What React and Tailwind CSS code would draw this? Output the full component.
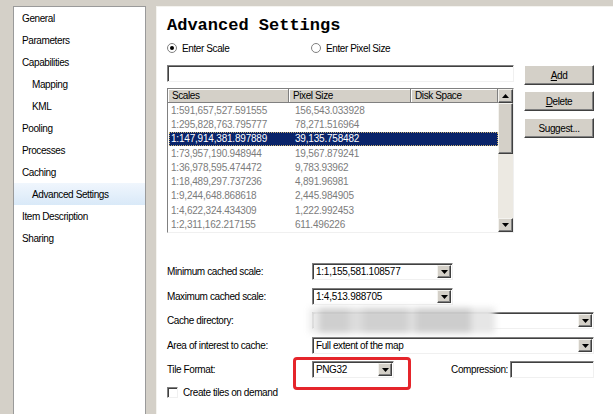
import React from "react";

const navItems = [
  ["General", 0],
  ["Parameters", 0],
  ["Capabilities", 0],
  ["Mapping", 1],
  ["KML", 1],
  ["Pooling", 0],
  ["Processes", 0],
  ["Caching", 0],
  ["Advanced Settings", 1, true],
  ["Item Description", 0],
  ["Sharing", 0],
];

const rows = [
  ["1:591,657,527.591555", "156,543.033928"],
  ["1:295,828,763.795777", "78,271.516964"],
  ["1:147,914,381.897889", "39,135.758482"],
  ["1:73,957,190.948944", "19,567.879241"],
  ["1:36,978,595.474472", "9,783.93962"],
  ["1:18,489,297.737236", "4,891.96981"],
  ["1:9,244,648.868618", "2,445.984905"],
  ["1:4,622,324.434309", "1,222.992453"],
  ["1:2,311,162.217155", "611.496226"],
];

function DownArrow() {
  return (
    <svg width="7" height="4" viewBox="0 0 7 4">
      <path d="M0 0h7L3.5 4z" fill="#000" />
    </svg>
  );
}

function UpArrow() {
  return (
    <svg width="7" height="4" viewBox="0 0 7 4">
      <path d="M0 4h7L3.5 0z" fill="#000" />
    </svg>
  );
}

function DropButton() {
  return (
    <div className="w-[14px] h-full bg-[#d4d0c8] border border-t-[#f4f3ef] border-l-[#f4f3ef] border-b-[#404040] border-r-[#404040] shadow-[inset_-1px_-1px_0_#808080] flex items-center justify-center shrink-0">
      <DownArrow />
    </div>
  );
}

function Combo({ className, mono, children }) {
  return (
    <div
      className={`${className} h-[17px] bg-white border border-t-[#808080] border-l-[#808080] border-b-[#f0f0f0] border-r-[#f0f0f0] shadow-[inset_1px_1px_0_#404040] p-[1px] flex items-stretch`}
    >
      <div
        className={
          mono
            ? "flex-1 flex items-center pl-[2px] tabular-nums tracking-[-0.25px] whitespace-nowrap overflow-hidden"
            : "flex-1 flex items-center pl-[2px] whitespace-nowrap overflow-hidden"
        }
      >
        {children}
      </div>
      <DropButton />
    </div>
  );
}

function Button({ children }) {
  return (
    <div className="h-[20px] w-[70px] bg-[#d4d0c8] border border-t-[#ffffff] border-l-[#ffffff] border-b-[#404040] border-r-[#404040] shadow-[inset_-1px_-1px_0_#808080] flex items-center justify-center">
      {children}
    </div>
  );
}

export default function App() {
  return (
    <div className="w-[613px] h-[414px] overflow-hidden bg-[#d4d0c8] flex pt-[6px] pl-[13px] gap-[10px] font-['Liberation_Sans',Arial,sans-serif] text-[10px] tracking-[-0.4px] text-black">
      {/* Left navigation */}
      <div className="w-[133px] shrink-0 bg-white border border-[#9a9a9a] border-b-0">
        {navItems.map(([label, level, active]) => (
          <div
            key={label}
            className={
              (active
                ? "bg-linear-to-b from-[#f0f6fd] to-[#d9e9f8] "
                : "") +
              (level ? "pl-[18px] " : "pl-[8px] ") +
              "h-[22px] flex items-center whitespace-nowrap"
            }
          >
            {label}
          </div>
        ))}
      </div>

      {/* Right panel */}
      <div className="flex-1 bg-white border-l border-t border-[#f4f3ef] pl-[10px] pr-[20px] flex flex-col">
        <div className="mt-[9px] h-[20px] leading-[20px] font-['Liberation_Mono',monospace] font-bold text-[17px] tracking-[0px]">
          Advanced Settings
        </div>

        <div className="mt-[4px] h-[16px] flex items-center">
          <div className="w-[144px] flex items-center">
            <div className="w-[10px] h-[10px] rounded-full border border-[#808080] bg-white flex items-center justify-center">
              <div className="w-[4px] h-[4px] rounded-full bg-black" />
            </div>
            <span className="ml-[5px]">Enter Scale</span>
          </div>
          <div className="flex items-center">
            <div className="w-[10px] h-[10px] rounded-full border border-[#808080] bg-white" />
            <span className="ml-[5px]">Enter Pixel Size</span>
          </div>
        </div>

        <div className="mt-[9px] flex gap-[10px]">
          <div className="w-[347px] flex flex-col">
            <div className="h-[17px] bg-white border border-t-[#808080] border-l-[#808080] border-b-[#f0f0f0] border-r-[#f0f0f0] shadow-[inset_1px_1px_0_#404040]" />
            <div className="mt-[6px] h-[145px] border border-t-[#808080] border-l-[#808080] border-b-[#f0f0f0] border-r-[#f0f0f0] flex">
              <div className="flex-1 flex flex-col overflow-hidden">
                <div className="h-[14px] flex shrink-0">
                  <div className="w-[121px] bg-[#d4d0c8] border-r border-b border-[#808080] shadow-[inset_1px_1px_0_#ffffff] pl-[4px] flex items-center">
                    Scales
                  </div>
                  <div className="w-[122px] bg-[#d4d0c8] border-r border-b border-[#808080] shadow-[inset_1px_1px_0_#ffffff] pl-[4px] flex items-center">
                    Pixel Size
                  </div>
                  <div className="flex-1 bg-[#d4d0c8] border-r border-b border-[#808080] shadow-[inset_1px_1px_0_#ffffff] pl-[4px] flex items-center">
                    Disk Space
                  </div>
                </div>
                {rows.map(([s, p], i) => (
                  <div
                    key={s}
                    className={
                      (i === 2
                        ? "bg-[#0a246a] text-white outline-1 outline-dotted outline-[#c8b070] -outline-offset-1 ml-[1px] "
                        : "text-[#7c7c7c] ml-[1px] ") +
                      "h-[14.3px] shrink-0 flex items-center tabular-nums tracking-[-0.2px] whitespace-nowrap"
                    }
                  >
                    <div className="w-[120px] pl-[2px]">{s}</div>
                    <div className="w-[122px] pl-[6px]">{p}</div>
                  </div>
                ))}
              </div>
              <div className="w-[15px] flex flex-col bg-[#ece9e2]">
                <div className="h-[14px] bg-[#d4d0c8] border border-t-[#f4f3ef] border-l-[#f4f3ef] border-b-[#404040] border-r-[#404040] shadow-[inset_-1px_-1px_0_#808080] flex items-center justify-center">
                  <UpArrow />
                </div>
                <div className="h-[51px] bg-[#d4d0c8] border border-t-[#f4f3ef] border-l-[#f4f3ef] border-b-[#404040] border-r-[#404040] shadow-[inset_-1px_-1px_0_#808080]" />
                <div className="flex-1" />
                <div className="h-[14px] bg-[#d4d0c8] border border-t-[#f4f3ef] border-l-[#f4f3ef] border-b-[#404040] border-r-[#404040] shadow-[inset_-1px_-1px_0_#808080] flex items-center justify-center">
                  <DownArrow />
                </div>
              </div>
            </div>
          </div>

          <div className="w-[70px] flex flex-col">
            <Button>
              <span className="underline">A</span>dd
            </Button>
            <div className="mt-[6px]">
              <Button>
                <span className="underline">D</span>elete
              </Button>
            </div>
            <div className="mt-[7px]">
              <Button>
                Su<span className="underline">g</span>gest...
              </Button>
            </div>
          </div>
        </div>

        {/* Form */}
        <div className="mt-[30px] flex flex-col">
          <div className="h-[17px] flex items-center">
            <div className="w-[145px] shrink-0">Minimum cached scale:</div>
            <Combo className="w-[141px]" mono>
              1:1,155,581.108577
            </Combo>
          </div>
          <div className="mt-[8px] h-[17px] flex items-center">
            <div className="w-[145px] shrink-0">Maximum cached scale:</div>
            <Combo className="w-[141px]" mono>
              1:4,513.988705
            </Combo>
          </div>
          <div className="mt-[7px] h-[17px] flex items-center relative">
            <div className="w-[145px] shrink-0">Cache directory:</div>
            <Combo className="flex-1" />
            <div className="absolute left-[142px] top-[-4px] w-[186px] h-[25px] flex blur-[3px]">
              <div className="w-[10px] bg-[#ececec]" />
              <div className="w-[30px] bg-[#cfcfcf]" />
              <div className="w-[14px] bg-[#dcdcdc]" />
              <div className="w-[45px] bg-[#d0d0d0]" />
              <div className="w-[8px] bg-[#dedede]" />
              <div className="w-[55px] bg-[#cdcdcd]" />
              <div className="w-[24px] bg-[#e6e6e6]" />
            </div>
          </div>
          <div className="mt-[8px] h-[17px] flex items-center">
            <div className="w-[145px] shrink-0">Area of interest to cache:</div>
            <Combo className="flex-1">Full extent of the map</Combo>
          </div>
          <div className="mt-[7px] h-[17px] flex items-center relative">
            <div className="w-[145px] shrink-0">Tile Format:</div>
            <Combo className="w-[82px]">PNG32</Combo>
            <div className="flex-1" />
            <div className="mr-[2px]">Compression:</div>
            <div className="w-[84px] h-[17px] bg-white border border-t-[#808080] border-l-[#808080] border-b-[#f0f0f0] border-r-[#f0f0f0] shadow-[inset_1px_1px_0_#404040]" />
            <div className="absolute left-[126px] top-[-4px] w-[118px] h-[33px] border-[3px] border-[#e5252b] rounded-[4px]" />
          </div>
          <div className="mt-[9px] h-[11px] flex items-center">
            <div className="w-[11px] h-[11px] bg-white border border-t-[#808080] border-l-[#808080] border-b-[#f0f0f0] border-r-[#f0f0f0] shadow-[inset_1px_1px_0_#404040]" />
            <span className="ml-[5px]">Create tiles on demand</span>
          </div>
        </div>
      </div>
    </div>
  );
}
